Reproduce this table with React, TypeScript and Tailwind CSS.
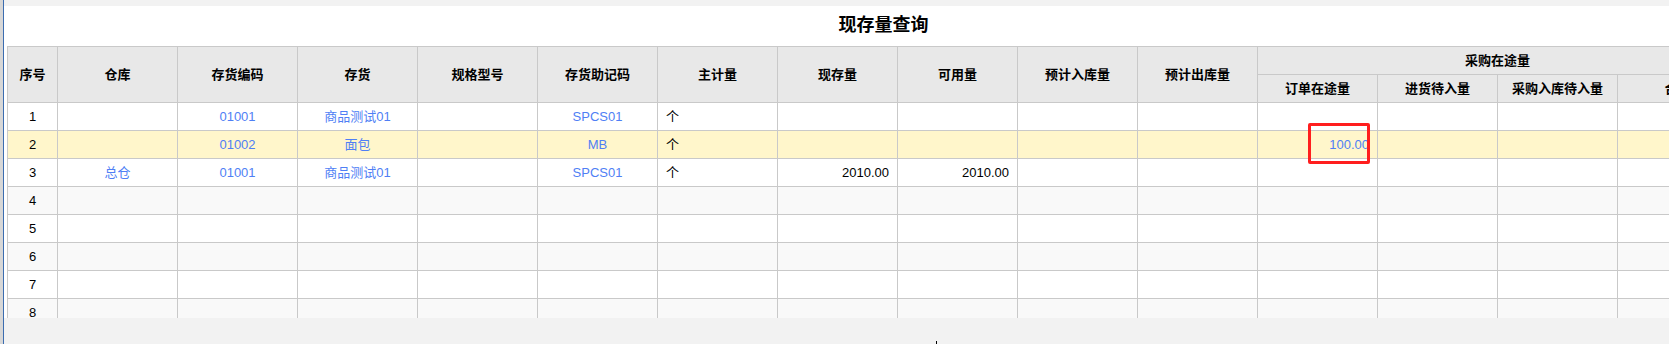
import React from "react";

type Row = {
  no: number;
  warehouse?: string;
  code?: string;
  name?: string;
  spec?: string;
  mnemonic?: string;
  unit?: string;
  onHand?: string;
  available?: string;
  orderTransit?: string;
};

const rows: Row[] = [
  { no: 1, code: "01001", name: "商品测试01", mnemonic: "SPCS01", unit: "个" },
  { no: 2, code: "01002", name: "面包", mnemonic: "MB", unit: "个", orderTransit: "100.00" },
  { no: 3, warehouse: "总仓", code: "01001", name: "商品测试01", mnemonic: "SPCS01", unit: "个", onHand: "2010.00", available: "2010.00" },
  { no: 4 },
  { no: 5 },
  { no: 6 },
  { no: 7 },
  { no: 8 },
];

const flatHeaders = ["仓库", "存货编码", "存货", "规格型号", "存货助记码", "主计量", "现存量", "可用量", "预计入库量", "预计出库量"];
const subHeaders = ["订单在途量", "进货待入量", "采购入库待入量", "合计"];

const th = "border border-[#c9c9c9] bg-[#e8e8e8] font-bold text-black text-center p-0";
const td = "border border-[#c9c9c9] h-[28px] p-0 px-[8px] whitespace-nowrap overflow-hidden";

export default function App() {
  return (
    <div
      className="relative flex h-[344px] w-[1669px] overflow-hidden bg-[#f2f2f2]"
      style={{ fontFamily: '"Liberation Sans", "Noto Sans CJK SC", sans-serif' }}
    >
      <div className="w-[3px] shrink-0 bg-[#d7d7d7]" />
      <div className="w-px shrink-0 bg-[#3c6db0]" />

      <div className="flex min-w-0 flex-1 flex-col">
        <div className="h-[6px] shrink-0" />
        <div className="h-[312px] shrink-0 overflow-hidden bg-white pl-[3px]">
          {/* title */}
          <div className="flex h-[40px] w-[1753px] items-center justify-center pb-[2px]">
            <h1 className="text-[18px] font-bold text-black">现存量查询</h1>
          </div>

          <table className="w-[1731px] min-w-[1731px] table-fixed border-collapse text-[13px] text-black">
            <colgroup>
              <col className="w-[50px]" />
              {[...flatHeaders, ...subHeaders].map((h) => (
                <col key={h} className="w-[120px]" />
              ))}
            </colgroup>
            <thead>
              <tr className="h-[28px]">
                <th rowSpan={2} className={th}>序号</th>
                {flatHeaders.map((h) => (
                  <th key={h} rowSpan={2} className={th}>{h}</th>
                ))}
                <th colSpan={4} className={th}>采购在途量</th>
              </tr>
              <tr className="h-[28px]">
                {subHeaders.map((h) => (
                  <th key={h} className={th}>{h}</th>
                ))}
              </tr>
            </thead>
            <tbody>
              {rows.map((r) => (
                <tr
                  key={r.no}
                  className={
                    r.no === 2 ? "bg-[#fff6cb]" : r.no % 2 === 0 ? "bg-[#f9f9f9]" : "bg-white"
                  }
                >
                  <td className={`${td} text-center`}>{r.no}</td>
                  <td className={`${td} text-center text-[#4f7ff5]`}>{r.warehouse}</td>
                  <td className={`${td} text-center text-[#4f7ff5]`}>{r.code}</td>
                  <td className={`${td} text-center text-[#4f7ff5]`}>{r.name}</td>
                  <td className={td}>{r.spec}</td>
                  <td className={`${td} text-center text-[#4f7ff5]`}>{r.mnemonic}</td>
                  <td className={`${td} text-left`}>{r.unit}</td>
                  <td className={`${td} text-right`}>{r.onHand}</td>
                  <td className={`${td} text-right`}>{r.available}</td>
                  <td className={td} />
                  <td className={td} />
                  <td className={`${td} text-right text-[#4f7ff5]`}>{r.orderTransit}</td>
                  <td className={td} />
                  <td className={td} />
                  <td className={td} />
                </tr>
              ))}
            </tbody>
          </table>
        </div>
      </div>

      {/* red annotation box */}
      <div className="absolute left-[1308px] top-[123px] h-[41px] w-[62px] rounded-[2px] border-[3px] border-[#ff1e1e]" />
      {/* cursor mark */}
      <div className="absolute left-[936px] top-[341px] h-[3px] w-px bg-black" />
    </div>
  );
}
